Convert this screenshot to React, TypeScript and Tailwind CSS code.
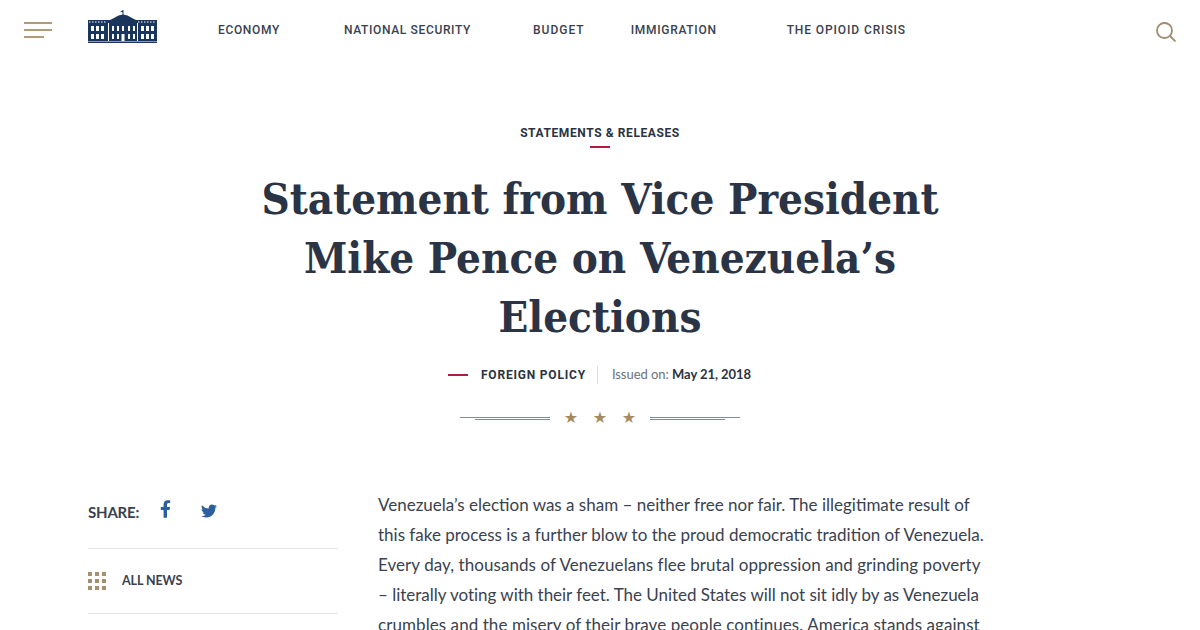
import React from "react";

const sans = "font-['Lato','Noto_Sans',sans-serif]";
const caps = "font-['Roboto','Noto_Sans',sans-serif]";

const navItems = [
  { label: "ECONOMY", className: "ml-[61px] tracking-[0.65px]" },
  { label: "NATIONAL SECURITY", className: "ml-[64px] tracking-[0.65px]" },
  { label: "BUDGET", className: "ml-[62px] tracking-[1px]" },
  { label: "IMMIGRATION", className: "ml-[46px] tracking-[0.7px]" },
  { label: "THE OPIOID CRISIS", className: "ml-[70px] tracking-[0.9px]" },
];

const bodyLines = [
  { text: "Venezuela’s election was a sham – neither free nor fair. The illegitimate result of", className: "" },
  { text: "this fake process is a further blow to the proud democratic tradition of Venezuela.", className: "" },
  { text: "Every day, thousands of Venezuelans flee brutal oppression and grinding poverty", className: "tracking-[0.06px]" },
  { text: "– literally voting with their feet. The United States will not sit idly by as Venezuela", className: "tracking-[-0.02px]" },
  { text: "crumbles and the misery of their brave people continues. America stands against", className: "tracking-[0.07px]" },
];

function Logo() {
  const wings = [3, 8, 13, 53, 58, 63];
  const centre = [24, 29, 40, 45];
  return (
    <svg width="69" height="33" viewBox="0 0 69 33" className="block">
      <path d="M35 0 V5" stroke="#1b365d" strokeWidth="1" fill="none" />
      <path d="M35 .5 L32 1.5 L35 2.5Z" fill="#1b365d" />
      <path d="M20 11 L26 8 Q35 1 44 8 L50 11 Z" fill="#1b365d" />
      <rect x="0" y="10" width="69" height="21" fill="#1b365d" />
      <rect x="0" y="31.5" width="69" height="1.5" fill="#1b365d" />
      <path d="M1 12 H19 M50 12 H68" stroke="#fff" strokeWidth="1" strokeDasharray="1.5 1.5" />
      {wings.map((x) => (
        <React.Fragment key={x}>
          <rect x={x} y="16" width="3" height="5" fill="#fff" />
          <rect x={x} y="24" width="3" height="5" fill="#fff" />
        </React.Fragment>
      ))}
      {centre.map((x) => (
        <React.Fragment key={x}>
          <rect x={x} y="16" width="2" height="5" fill="#fff" />
          <rect x={x} y="24" width="2" height="5" fill="#fff" />
        </React.Fragment>
      ))}
      <rect x="20" y="13" width="1" height="18" fill="#fff" />
      <rect x="34" y="16" width="2" height="5" fill="#fff" />
      <rect x="33.5" y="24" width="3" height="7" fill="#fff" />
      <rect x="49" y="13" width="1" height="18" fill="#fff" />
    </svg>
  );
}

function Rules({ flip }: { flip?: boolean }) {
  return (
    <div className={`flex w-[90px] flex-col gap-[1px] ${flip ? "items-start" : "items-end"}`}>
      <div className="h-px w-[90px] bg-[#7f8b96]" />
      <div className="h-px w-[75px] bg-[#7f8b96]" />
    </div>
  );
}

export default function App() {
  return (
    <div className={`h-[630px] w-[1200px] overflow-hidden bg-white text-[#2b3342] ${sans}`}>
      <header className="flex h-[60px] items-center pl-[24px] pr-[24px]">
        <div className="flex w-[28px] flex-col gap-[5px]">
          <div className="h-[2px] w-[28px] bg-[#b39a76]" />
          <div className="h-[2px] w-[28px] bg-[#b39a76]" />
          <div className="h-[2px] w-[20px] bg-[#b39a76]" />
        </div>
        <div className="mb-[8px] ml-[36px]">
          <Logo />
        </div>
        <nav className="flex">
          {navItems.map((item) => (
            <a key={item.label} className={`${item.className} ${caps} text-[12px] font-medium text-[#3a414d]`}>
              {item.label}
            </a>
          ))}
        </nav>
        <svg width="20" height="20" viewBox="0 0 20 20" fill="none" className="ml-auto mt-[4px]" stroke="#a08c70" strokeWidth="1.8">
          <circle cx="8.5" cy="8.5" r="7.5" />
          <path d="M14 14 L19.5 19.5" />
        </svg>
      </header>

      <div className="flex flex-col items-center pt-[65px]">
        <div className={`${caps} text-[12px] leading-[16px] font-bold tracking-[0.6px]`}>STATEMENTS &amp; RELEASES</div>
        <div className="mt-[5px] h-[2px] w-[20px] bg-[#b31942]" />
        <h1 className="mt-[21px] text-center font-['DejaVu_Serif_Condensed','DejaVu_Serif',serif] text-[43.5px] leading-[59px] font-bold text-[#2a3445]">
          Statement from Vice President
          <br />
          Mike Pence on Venezuela’s
          <br />
          Elections
        </h1>
        <div className="mt-[20px] flex h-[18px] items-center pr-[1px]">
          <div className="h-[2px] w-[20px] bg-[#b31942]" />
          <span className={`${caps} ml-[13px] text-[12px] font-bold tracking-[0.8px]`}>FOREIGN POLICY</span>
          <div className="ml-[11px] h-[18px] w-px bg-[#dddddd]" />
          <span className="ml-[14px] text-[13px] tracking-[-0.05px] text-[#6b7280]">
            Issued on: <span className="font-bold text-[#2b3342]">May 21, 2018</span>
          </span>
        </div>
        <div className="mt-[25px] flex items-center">
          <Rules />
          <div className="flex w-[100px] justify-center text-center font-['DejaVu_Sans',sans-serif] text-[16px] leading-[18px] text-[#a68a5f]">
            <span className="w-[29px]">★</span>
            <span className="w-[29px]">★</span>
            <span className="w-[29px]">★</span>
          </div>
          <Rules flip />
        </div>
      </div>

      <div className="mt-[62px] flex pl-[88px]">
        <aside className="w-[250px]">
          <div className="flex h-[60px] items-center border-b border-[#e2e4e8] pb-[13px]">
            <span className="text-[15px] font-bold tracking-[-0.2px] text-[#3a414d]">SHARE:</span>
            <svg viewBox="0 0 320 512" className="mb-[6px] ml-[21px] h-[18px] w-[11px] fill-[#2c5f9e]">
              <path d="M279 288l14-93h-89v-60c0-25 12-50 52-50h41V6s-37-6-72-6c-73 0-121 44-121 125v70H23v93h81v224h100V288z" />
            </svg>
            <svg viewBox="0 0 512 512" className="mb-[2px] ml-[30px] h-[16px] w-[16px] fill-[#2c5f9e]">
              <path d="M459 152c0 5 0 9 0 14 0 139-106 299-299 299-60 0-115-17-161-47 8 1 16 1 25 1 49 0 94-17 130-45-46-1-85-31-98-73 6 1 13 2 20 2 9 0 19-1 27-4-48-10-84-52-84-103v-1c14 8 30 13 47 13-28-19-47-51-47-87 0-19 5-37 14-53 52 64 129 105 216 110-2-8-3-16-3-24 0-58 47-105 105-105 30 0 58 13 77 33 24-5 47-14 67-26-8 25-25 46-46 59 21-2 42-8 61-16-14 21-32 39-51 53z" />
            </svg>
          </div>
          <div className="flex h-[65px] items-center border-b border-[#e2e4e8]">
            <div className="grid grid-cols-3 gap-[3px]">
              {Array.from({ length: 9 }).map((_, i) => (
                <div key={i} className="h-[4px] w-[4px] bg-[#a68f6f]" />
              ))}
            </div>
            <span className="ml-[16px] text-[12.5px] font-bold tracking-[-0.1px] text-[#3a414d]">ALL NEWS</span>
          </div>
        </aside>
        <article className="ml-[40px] mt-[1px] text-[17px] leading-[30px] text-[#3a4250]">
          {bodyLines.map((line) => (
            <div key={line.text} className={`whitespace-nowrap ${line.className}`}>
              {line.text}
            </div>
          ))}
        </article>
      </div>
    </div>
  );
}
